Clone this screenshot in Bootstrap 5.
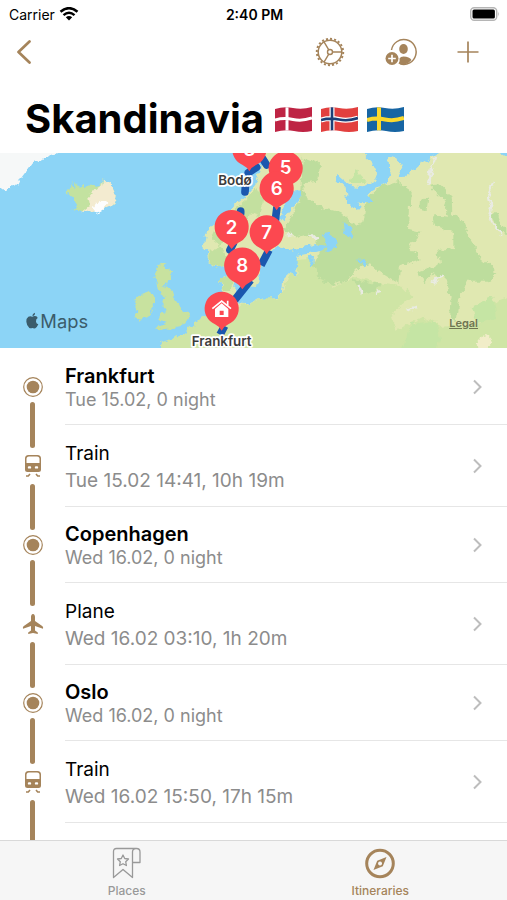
<!DOCTYPE html>
<html lang="en">
<head>
<meta charset="utf-8">
<meta name="viewport" content="width=device-width, initial-scale=1">
<title>Skandinavia</title>
<link href="https://cdn.jsdelivr.net/npm/bootstrap@5.3.0/dist/css/bootstrap.min.css" rel="stylesheet">
<style>
:root { --gold: #a5845b; }
body { font-family: Inter, "Liberation Sans", sans-serif; color: #000; background: #fff; min-height: 100vh; }
svg { display: block; }
.status-bar { height: 28px; font-size: 14px; padding: 0 7px 0 9px; }
.status-bar > * { flex: 1 1 0; }
.status-time { font-weight: 600; }
.tool-bar { height: 48px; padding: 0 28px 0 16px; color: var(--gold); }
.tool-bar .btn { color: var(--gold); border: 0; padding: 0; }
.tool-group { gap: 40px; }
.page-title { font-size: 40px; font-weight: 700; line-height: 48px; padding: 19px 25px 10px; gap: 11px; }
.flag-set { gap: 9px; }
.map-view { height: 195px; overflow: hidden; }
.map-label { font-weight: 600; fill: #3c3c3c; stroke: #fff; stroke-width: 10px; stroke-linejoin: round; paint-order: stroke; text-anchor: middle; font-size: 40px; }
.pin-text { fill: #fff; font-weight: 600; font-size: 56px; text-anchor: middle; }
.legal-link { right: 29px; bottom: 18px; font-size: 11px; line-height: 14px; font-weight: 600; color: #6f7552; }
.trip-list { padding-top: 1px; }
.trip-row { color: #000; text-decoration: none; min-height: 76px; line-height: 23px; }
.trip-row.leg { min-height: 82px; line-height: 27px; }
.rail { width: 65px; color: var(--gold); }
.rail-line { width: 5px; height: 23px; background: var(--gold); }
.rail-line.from { border-radius: 0 0 3px 3px; }
.rail-line.to { border-radius: 3px 3px 0 0; }
.trip-row:first-child .from { visibility: hidden; }
.trip-body { border-bottom: 1px solid #e6e6e6; padding-right: 24px; }
.trip-text { padding-top: 2px; }
.trip-name { font-size: 20px; font-weight: 600; }
.leg .trip-name { font-size: 19px; font-weight: 400; }
.trip-info { font-size: 18px; color: #8c8c8c; }
.leg .trip-info { font-size: 19px; }
.rail-tail { height: 77px; }
.tab-strip { height: 60px; background: #f6f6f6; border-top: 1px solid #d9d9d9; }
.tab-link { color: #999; text-decoration: none; font-size: 12px; line-height: 14px; font-weight: 500; padding-top: 6px; gap: 5px; }
.tab-link.active { color: var(--gold); }
</style>
<script src="https://cdn.jsdelivr.net/npm/bootstrap@5.3.0/dist/js/bootstrap.bundle.min.js"></script>
</head>
<body>
<svg width="0" height="0" class="position-absolute" aria-hidden="true">
  <defs>
    <clipPath id="wave"><path d="M0 3Q9 0 18 2T37 1V25Q28 27 19 25T0 26Z"/></clipPath>
    <symbol id="i-stop" viewBox="0 0 22 22"><circle cx="11" cy="11" r="9.3" fill="none" stroke="currentColor" stroke-width="1.2"/><circle cx="11" cy="11" r="6.3" fill="currentColor"/></symbol>
    <symbol id="i-train" viewBox="0 0 22 22"><path fill="currentColor" fill-rule="evenodd" d="M6.500 0h9Q19 0 19 3.500V14.500Q19 17 16.500 17h-11Q3 17 3 14.500V3.500Q3 0 6.500 0ZM7 1.500Q4.500 1.500 4.500 4v4h13V4Q17.500 1.500 15 1.500ZM7 11.200a1.200 1.200 0 0 0 0 2.400h1a1.200 1.200 0 0 0 0-2.400ZM14 11.200a1.200 1.200 0 0 0 0 2.400h1a1.200 1.200 0 0 0 0-2.400Z"/><path d="M4 21h2.300l1.700-2M18 21h-2.300l-1.700-2" stroke="currentColor" stroke-width="1.600" fill="none"/></symbol>
    <symbol id="i-plane" viewBox="0 0 22 22"><path fill="currentColor" d="M11 1C12.400 1 13 2.500 13 4V8L20.500 13.200Q21.500 14.200 21 15.700L13 13V17.500L15.800 19.500V21L11 19.900 6.200 21V19.500L9 17.500V13L1 15.700Q.500 14.200 1.500 13.200L9 8V4C9 2.500 9.600 1 11 1Z"/></symbol>
    <symbol id="i-next" viewBox="0 0 10 16"><path d="M1 1.500L7.500 8 1 14.500" fill="none" stroke="#bdbdbd" stroke-width="2"/></symbol>
    <symbol id="i-pin" viewBox="-60 -60 120 130" overflow="visible"><path fill="#fc4850" d="M0-51A51 51 0 0 1 20 47Q7 53 0 66Q-7 53-20 47A51 51 0 0 1 0-51Z"/></symbol>
  </defs>
</svg>

<header>
  <div class="status-bar d-flex align-items-center">
    <div class="d-flex align-items-center gap-1">
      <span>Carrier</span>
      <svg width="20" height="15" viewBox="0 0 20 15" aria-label="Wi-Fi"><g fill="none" stroke="#000" stroke-width="2.500"><path d="M1.500 4.800Q10-2.500 18.500 4.800"/><path d="M4.500 8.100Q10 3.300 15.500 8.100"/></g><path d="M10 13.500L6.800 10.200Q10 7.600 13.200 10.200Z"/></svg>
    </div>
    <div class="status-time text-center">2:40 PM</div>
    <div class="d-flex justify-content-end">
      <svg width="30" height="14" viewBox="0 0 30 14" aria-label="Battery"><rect x=".7" y=".7" width="26" height="12.600" rx="3.500" fill="#fff" stroke="#b5b5b5" stroke-width="1.400"/><rect x="2.500" y="2.500" width="22.400" height="9" rx="1.500"/><path d="M28.300 4.500Q30 7 28.300 9.500Z" fill="#b5b5b5"/></svg>
    </div>
  </div>
  <nav class="tool-bar d-flex align-items-center justify-content-between" aria-label="Trip">
    <button type="button" class="btn" aria-label="Back"><svg width="16" height="24" viewBox="0 0 16 24"><path d="M13.500 1.500L2.500 12 13.500 22.500" fill="none" stroke="currentColor" stroke-width="2.700" stroke-linecap="round" stroke-linejoin="round"/></svg></button>
    <div class="tool-group d-flex align-items-center">
      <button type="button" class="btn" aria-label="Settings"><svg width="30" height="30" viewBox="0 0 30 30" fill="none" stroke="currentColor"><circle cx="15" cy="15" r="11.800" stroke-width="1.500"/><circle cx="15" cy="15" r="13.200" stroke-width="2" pathLength="80" stroke-dasharray="2 2"/><circle cx="15" cy="15" r="2.500" stroke-width="1.400"/><path d="M17.500 15H27M13.800 12.800L9 4.800M13.800 17.200L9 25.200" stroke-width="1.400"/></svg></button>
      <button type="button" class="btn" aria-label="Add traveller"><svg width="32" height="30" viewBox="0 0 32 30"><path d="M6.500 13A12.400 12.400 0 1 1 15 26.800" fill="none" stroke="currentColor" stroke-width="1.500"/><ellipse cx="18.500" cy="12" rx="4.300" ry="5" fill="currentColor"/><path d="M14.500 21.500Q15.500 19.500 18.500 19.500 24.500 19.500 26.500 23 23 27.200 18.500 27.500L13.500 26.800Q15.300 24.500 14.500 21.500Z" fill="currentColor"/><circle cx="7" cy="21.500" r="6.500" fill="currentColor"/><path d="M7 17.700v7.600M3.200 21.500h7.600" stroke="#fff" stroke-width="1.700"/></svg></button>
      <button type="button" class="btn" aria-label="Add stop"><svg width="22" height="22" viewBox="0 0 22 22"><path d="M11 .5v21M.5 11h21" stroke="currentColor" stroke-width="1.700"/></svg></button>
    </div>
  </nav>
  <h1 class="page-title d-flex align-items-center mb-0">
    <span>Skandinavia</span>
    <span class="flag-set d-flex">
      <svg width="37" height="27" viewBox="0 0 37 27" role="img" aria-label="Denmark"><g clip-path="url(#wave)"><path fill="#be2444" d="M0 0h37v27H0z"/><path d="M0 14Q9 11.500 18 13.500T37 12M12 0V27" fill="none" stroke="#fff" stroke-width="3"/></g></svg>
      <svg width="37" height="27" viewBox="0 0 37 27" role="img" aria-label="Norway"><g clip-path="url(#wave)"><path fill="#e2403f" d="M0 0h37v27H0z"/><path d="M0 14Q9 11.500 18 13.500T37 12M11 0V27" fill="none" stroke="#fff" stroke-width="5"/><path d="M0 14Q9 11.500 18 13.500T37 12M11 0V27" fill="none" stroke="#1d3f77" stroke-width="2.600"/></g></svg>
      <svg width="37" height="27" viewBox="0 0 37 27" role="img" aria-label="Sweden"><g clip-path="url(#wave)"><path fill="#1765a3" d="M0 0h37v27H0z"/><path d="M0 14Q9 11.500 18 13.500T37 12M12 0V27" fill="none" stroke="#fbd92e" stroke-width="4"/></g></svg>
    </span>
  </h1>
</header>

<main class="pb-0">
  <section class="map-view position-relative" aria-label="Route map">
    <svg width="100%" height="100%" viewBox="0 9 1521 585" preserveAspectRatio="xMidYMid slice">
      <defs><filter id="coast" x="-5%" y="-5%" width="110%" height="110%" color-interpolation-filters="sRGB"><feTurbulence type="fractalNoise" baseFrequency=".05" numOctaves="3" seed="4"/><feDisplacementMap in="SourceGraphic" scale="24" xChannelSelector="R" yChannelSelector="G"/></filter></defs>
      <path fill="#8cd4f6" d="M0 0h1521v600H0z"/>
      <g filter="url(#coast)">
        <path fill="#f6f8f8" d="M-20-20H200L150 20 110 32 90 40 82 62 65 85 55 105 30 115 15 125 0 115-20 110Z"/>
        <path fill="#c3e2a0" d="M200 125L215 100 228 115 225 92 240 115 262 105 285 110 315 92 335 108 350 140 340 165 310 175 275 192 245 182 220 178 235 162 222 145 205 135Z"/>
        <path fill="#f3ebd0" d="M315 92L335 108 350 140 340 165 310 178 275 192 247 184 270 165 265 140 285 115Z"/>
        <path fill="#fdfdfd" d="M283 165L300 152 325 155 318 170 300 185 280 192Z"/>
        <path fill="#c8e29f" d="M472 345L500 338 490 355 517 362 505 395 490 405 512 415 520 440 535 460 545 485 568 490 560 510 548 530 515 535 490 538 468 543 485 525 500 515 475 510 480 495 500 480 490 465 498 440 480 432 470 410 463 385Z"/>
        <path fill="#c8e29f" d="M425 432L455 422 465 445 458 480 445 500 420 512 403 505 415 480 402 460 410 440Z"/>
        <path fill="#e0e8b1" d="M805-10L770 95 735 140 690 180 640 225 618 250 612 290 628 305 622 340 652 355 690 335 715 310 735 400 752 412 775 395 785 350 808 310 835 285 870 300 950 283 990 290 975 300 935 310 885 318 900 335 885 352 890 380 870 365 850 385 845 425 825 445 800 438 780 448 740 462 708 460 700 440 705 395 690 372 660 385 665 420 690 462 640 495 600 505 580 530 545 555 515 575 485 578 480 620H1560V-10Z"/>
        <path fill="#cfe5a5" d="M890 325L935 320 945 350 1000 410 1070 380 1140 400 1210 410 1240 440 1175 495 1190 540 1270 500 1330 530 1440 520 1470 460 1560 430V620H480L485 578 545 555 600 505 690 470 740 465 800 440 825 448 848 425 870 365 890 382Z"/>
        <path fill="#c3e09f" d="M650 230L690 250 660 290 690 330 655 355 625 340 630 305 665 290 635 265ZM770 110L790 150 780 200 750 190 740 220 700 180 735 150ZM660 385L690 376 700 400 690 420 668 420Z"/>
        <path fill="#bddd9d" d="M905 20L960 40 955 95 910 100 920 140 955 170 1000 182 1040 200 1065 225 1090 215 1100 150 1145 110 1195 95 1232 120 1227 240 1262 248 1225 290 1262 330 1200 350 1195 400 1145 370 1110 340 1060 365 1035 395 1000 405 962 390 940 340 965 300 940 255 900 262 850 240 880 190 900 150Z"/>
        <path fill="#bddd9d" d="M1290 110L1322 105 1355 140 1357 190 1392 220 1412 270 1442 320 1495 370 1460 395 1397 395 1377 450 1367 510 1347 505 1352 440 1340 390 1300 370 1270 400 1255 365 1320 340 1315 300 1360 295 1360 250 1300 225 1300 195 1345 200 1330 150ZM1260 150L1285 145 1280 180 1258 175ZM1470 190L1490 190 1500 220 1530 250 1500 245ZM1060 390L1110 400 1142 400 1130 430 1080 425Z"/>
        <path fill="#c5e5a4" d="M1230 520L1310 515 1320 570 1300 620H1200L1220 560ZM1415 470L1480 440 1490 500 1430 520ZM1050 100L1070 60 1100 95Z"/>
        <path fill="#8cd4f6" d="M1070-10L1117 40 1132 70 1122 95 1092 112 1050 108 1012 75 1007 85 1037 115 1042 160 1077 180 1087 168 1067 158 1117 155 1107 130 1162 100 1172 70 1167 15 1192 25 1207 55 1192 82 1217 80 1262 40 1307 15 1320-10ZM877 120L907 122 895 155 850 205 830 225 850 170ZM970 255L990 248 1007 270 1005 295 980 302ZM1028 215L1045 225 1062 262 1055 270 1032 250ZM1075 330L1088 328 1100 342 1090 352ZM927 320L942 318 940 345 930 350ZM1480-10H1530V20Z"/>
        <path fill="#8cd4f6" d="M762 445L775 400 785 350 808 310 835 285 870 300 950 283 985 290 970 300 930 310 885 318 892 350 870 365 850 385 845 425 825 445Z"/>
        <path fill="none" stroke="#e9ebe2" stroke-width="7" d="M1482 95L1467 130 1477 170 1467 200 1502 255M1305 20L1295 60 1285 110M925 250L955 270M880 255L860 258M1295 400L1325 378M1220 480L1250 470M1075 405L1085 430M1140 425L1130 440"/>
        <path fill="#f1edc8" d="M1432 565L1460 555 1475 575 1455 605 1435 590Z"/>
      </g>
      <g fill="none" stroke="#1b57ae" stroke-width="23" stroke-linecap="round">
        <path d="M745 68L770 52M784 20L800 45M736 112L735 126M722 183V190M700 280L690 300"/>
        <path stroke-linecap="butt" d="M831 170L825 218M807 300L783 346M752 390L704 450M674 528L660 554"/>
      </g>
      <g>
        <g transform="translate(748 -2)"><use href="#i-pin" x="-60" y="-60" width="120" height="130"/><text class="pin-text" y="20">3</text></g>
        <g transform="translate(857 55)"><use href="#i-pin" x="-60" y="-60" width="120" height="130"/><text class="pin-text" y="17">5</text></g>
        <g transform="translate(830 115)"><use href="#i-pin" x="-60" y="-60" width="120" height="130"/><text class="pin-text" y="20">6</text></g>
        <g transform="translate(800 247)"><use href="#i-pin" x="-60" y="-60" width="120" height="130"/><text class="pin-text" y="20">7</text></g>
        <g transform="translate(695 231)"><use href="#i-pin" x="-60" y="-60" width="120" height="130"/><text class="pin-text" y="20">2</text></g>
        <g transform="translate(727 347)"><use href="#i-pin" x="-64" y="-64" width="128" height="139"/><text class="pin-text" y="20">8</text></g>
        <g transform="translate(665 476)"><use href="#i-pin" x="-60" y="-60" width="120" height="130"/><path fill="#fff" fill-rule="evenodd" d="M-20 1L0-16 20 1V25H-20ZM-6 6V19H6V6Z"/><path d="M-28 0L0-23 28 0M18-24V-8" fill="none" stroke="#fff" stroke-width="5"/></g>
      </g>
      <text class="map-label" x="705" y="105">Bodø</text>
      <text class="map-label" x="665" y="587">Frankfurt</text>
      <g fill="#3b5c6b"><path d="M97 500Q103 496 109 499 112 501 113 504 107 508 108 515 109 521 115 523 111 532 106 535 101 536 97 534 92 536 88 534 80 527 79 515 78 505 85 500 91 497 97 500ZM97 498Q97 490 105 488 106 496 97 498Z"/><text x="121" y="534" font-size="55" font-weight="400">Maps</text></g>
    </svg>
    <a href="#legal" class="legal-link position-absolute">Legal</a>
  </section>

  <div class="trip-list">
    <a href="#frankfurt" class="trip-row d-flex">
      <span class="rail d-flex flex-column align-items-center justify-content-between"><span class="rail-line from"></span><svg width="22" height="22"><use href="#i-stop"/></svg><span class="rail-line to"></span></span>
      <span class="trip-body d-flex flex-fill align-items-center justify-content-between"><span class="trip-text"><span class="trip-name d-block">Frankfurt</span><span class="trip-info d-block">Tue 15.02, 0 night</span></span><svg width="10" height="16"><use href="#i-next"/></svg></span>
    </a>
    <a href="#train-1" class="trip-row leg d-flex">
      <span class="rail d-flex flex-column align-items-center justify-content-between"><span class="rail-line from"></span><svg width="22" height="22"><use href="#i-train"/></svg><span class="rail-line to"></span></span>
      <span class="trip-body d-flex flex-fill align-items-center justify-content-between"><span class="trip-text"><span class="trip-name d-block">Train</span><span class="trip-info d-block">Tue 15.02 14:41, 10h 19m</span></span><svg width="10" height="16"><use href="#i-next"/></svg></span>
    </a>
    <a href="#copenhagen" class="trip-row d-flex">
      <span class="rail d-flex flex-column align-items-center justify-content-between"><span class="rail-line from"></span><svg width="22" height="22"><use href="#i-stop"/></svg><span class="rail-line to"></span></span>
      <span class="trip-body d-flex flex-fill align-items-center justify-content-between"><span class="trip-text"><span class="trip-name d-block">Copenhagen</span><span class="trip-info d-block">Wed 16.02, 0 night</span></span><svg width="10" height="16"><use href="#i-next"/></svg></span>
    </a>
    <a href="#plane" class="trip-row leg d-flex">
      <span class="rail d-flex flex-column align-items-center justify-content-between"><span class="rail-line from"></span><svg width="22" height="22"><use href="#i-plane"/></svg><span class="rail-line to"></span></span>
      <span class="trip-body d-flex flex-fill align-items-center justify-content-between"><span class="trip-text"><span class="trip-name d-block">Plane</span><span class="trip-info d-block">Wed 16.02 03:10, 1h 20m</span></span><svg width="10" height="16"><use href="#i-next"/></svg></span>
    </a>
    <a href="#oslo" class="trip-row d-flex">
      <span class="rail d-flex flex-column align-items-center justify-content-between"><span class="rail-line from"></span><svg width="22" height="22"><use href="#i-stop"/></svg><span class="rail-line to"></span></span>
      <span class="trip-body d-flex flex-fill align-items-center justify-content-between"><span class="trip-text"><span class="trip-name d-block">Oslo</span><span class="trip-info d-block">Wed 16.02, 0 night</span></span><svg width="10" height="16"><use href="#i-next"/></svg></span>
    </a>
    <a href="#train-2" class="trip-row leg d-flex">
      <span class="rail d-flex flex-column align-items-center justify-content-between"><span class="rail-line from"></span><svg width="22" height="22"><use href="#i-train"/></svg><span class="rail-line to"></span></span>
      <span class="trip-body d-flex flex-fill align-items-center justify-content-between"><span class="trip-text"><span class="trip-name d-block">Train</span><span class="trip-info d-block">Wed 16.02 15:50, 17h 15m</span></span><svg width="10" height="16"><use href="#i-next"/></svg></span>
    </a>
    <div class="rail rail-tail d-flex flex-column align-items-center"><span class="rail-line from"></span></div>
  </div>
</main>

<nav class="tab-strip fixed-bottom d-flex" aria-label="Sections">
  <a href="#places" class="tab-link d-flex flex-column align-items-center col-6">
    <svg width="30" height="32" viewBox="0 0 30 32" fill="none" stroke="currentColor" stroke-width="1.300" stroke-linejoin="round"><path d="M20.500 4.500V30.500L11 22.500 1.500 30.500V4.500Q1.500 1.500 4.500 1.500H24.500Q28 1.500 28 5V15.500H20.500M20.500 5Q20.500 1.500 24 1.500"/><path d="M11 8l1.700 3.500 3.800.5-2.800 2.700.7 3.800-3.400-1.800-3.400 1.800.7-3.800L5.500 12l3.800-.5Z"/></svg>
    <span>Places</span>
  </a>
  <a href="#itineraries" class="tab-link active d-flex flex-column align-items-center col-6" aria-current="page">
    <svg width="32" height="32" viewBox="0 0 32 32"><circle cx="16" cy="16.500" r="13.300" fill="none" stroke="currentColor" stroke-width="3"/><path fill="currentColor" fill-rule="evenodd" d="M22.500 10L18.800 19.300 9.500 23 13.200 13.700ZM16 14.500a2 2 0 1 0 .1 0Z"/></svg>
    <span>Itineraries</span>
  </a>
</nav>
</body>
</html>
